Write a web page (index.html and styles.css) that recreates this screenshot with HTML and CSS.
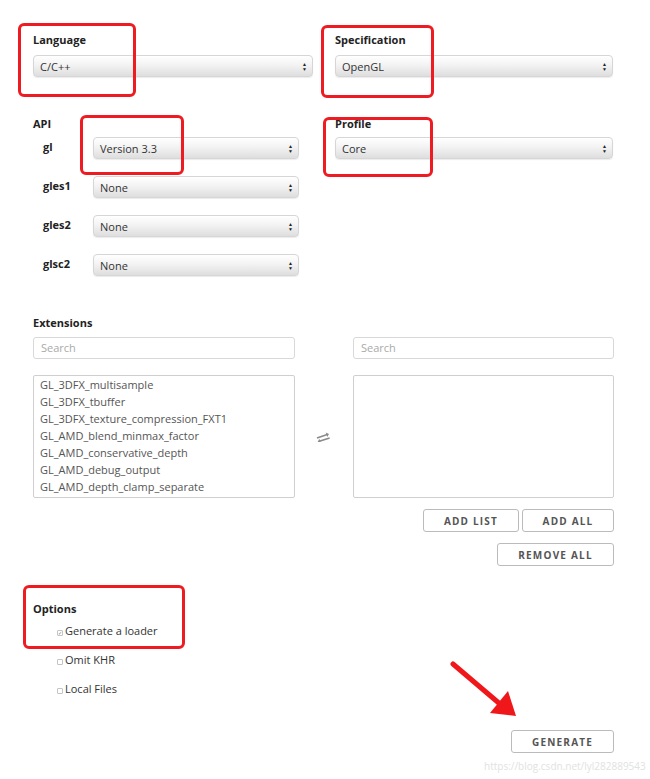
FILE: index.html
```
<!DOCTYPE html>
<html lang="en">
<head>
  <meta charset="UTF-8" />
  <title>glad</title>
  <link rel="stylesheet" href="styles.css">
</head>
<body>
  <div class="page">

    <div class="row two-col">
      <div class="field">
        <label>Language</label>
        <div class="select">C/C++<span class="caret">&#9650;<br>&#9660;</span></div>
      </div>
      <div class="field">
        <label>Specification</label>
        <div class="select">OpenGL<span class="caret">&#9650;<br>&#9660;</span></div>
      </div>
    </div>

    <div class="row two-col api-row">
      <div class="field">
        <label>API</label>
        <div class="api-list">
          <div class="api-item">
            <span class="api-name">gl</span>
            <div class="select">Version 3.3<span class="caret">&#9650;<br>&#9660;</span></div>
          </div>
          <div class="api-item">
            <span class="api-name">gles1</span>
            <div class="select">None<span class="caret">&#9650;<br>&#9660;</span></div>
          </div>
          <div class="api-item">
            <span class="api-name">gles2</span>
            <div class="select">None<span class="caret">&#9650;<br>&#9660;</span></div>
          </div>
          <div class="api-item">
            <span class="api-name">glsc2</span>
            <div class="select">None<span class="caret">&#9650;<br>&#9660;</span></div>
          </div>
        </div>
      </div>
      <div class="field">
        <label>Profile</label>
        <div class="select profile">Core<span class="caret">&#9650;<br>&#9660;</span></div>
      </div>
    </div>

    <div class="row extensions">
      <label>Extensions</label>
      <div class="ext-grid">
        <div class="search">Search</div>
        <div></div>
        <div class="search">Search</div>

        <div class="listbox">
          <div>GL_3DFX_multisample</div>
          <div>GL_3DFX_tbuffer</div>
          <div>GL_3DFX_texture_compression_FXT1</div>
          <div>GL_AMD_blend_minmax_factor</div>
          <div>GL_AMD_conservative_depth</div>
          <div>GL_AMD_debug_output</div>
          <div>GL_AMD_depth_clamp_separate</div>
        </div>
        <div class="swap">
          <svg width="14" height="10" viewBox="0 0 14 10">
            <g transform="rotate(-18 7 5)" fill="#8a8a8a">
              <path d="M1 3.2h10v-1.6l2.6 2.4-2.6 2.4v-1.6h-10z"/>
              <path d="M13 7.2h-10v-1.6l-2.6 2.4 2.6 2.4v-1.6h10z"/>
            </g>
          </svg>
        </div>
        <div class="listbox"></div>
      </div>
      <div class="ext-buttons">
        <div class="btn-row">
          <button class="btn add-list">ADD LIST</button>
          <button class="btn add-all">ADD ALL</button>
        </div>
        <div class="btn-row">
          <button class="btn remove-all">REMOVE ALL</button>
        </div>
      </div>
    </div>

    <div class="row options">
      <label>Options</label>
      <div class="option"><span class="check checked">&#10003;</span>Generate a loader</div>
      <div class="option"><span class="check"></span>Omit KHR</div>
      <div class="option"><span class="check"></span>Local Files</div>
    </div>

    <div class="generate-row">
      <button class="btn generate">GENERATE</button>
    </div>

    <!-- annotations drawn over the form -->
    <div class="mark mark-language"></div>
    <div class="mark mark-spec"></div>
    <div class="mark mark-gl"></div>
    <div class="mark mark-profile"></div>
    <div class="mark mark-options"></div>
    <svg class="arrow" width="80" height="70" viewBox="0 0 80 70">
      <path d="M3 4 L50 44" stroke="#f0171b" stroke-width="5" stroke-linecap="round" fill="none"/>
      <path d="M40 53 L66 56 L58 31 Z" fill="#f0171b"/>
    </svg>
    <div class="watermark">https://blog.csdn.net/lyl282889543</div>
  </div>
</body>
</html>
```

FILE: styles.css
```
* {
  box-sizing: border-box;
}

body {
  margin: 0;
  background: #ffffff;
  font-family: 'Open Sans', 'Liberation Sans', sans-serif;
  font-size: 11px;
  color: #444;
}

.page {
  position: relative;
  width: 650px;
  height: 779px;
  padding: 33px 0 0 33px;
  overflow: hidden;
}

label {
  display: block;
  font-weight: 700;
  color: #222;
  line-height: 14px;
  height: 14px;
}

.two-col {
  display: grid;
  grid-template-columns: 280px 278px;
  column-gap: 22px;
}

.field > .select {
  margin-top: 8px;
}

.select {
  position: relative;
  height: 22px;
  line-height: 21px;
  padding-left: 6px;
  border: 1px solid #d6d6d6;
  border-radius: 4px;
  background: linear-gradient(#ffffff, #f3f3f3 45%, #dedede);
  box-shadow: 0 1px 1px rgba(0, 0, 0, 0.08);
  color: #333;
}

.caret {
  position: absolute;
  right: 5px;
  top: 6px;
  font-size: 5px;
  line-height: 5px;
  color: #222;
}

.api-row {
  margin-top: 40px;
}

.api-list {
  margin-top: 6px;
  display: flex;
  flex-direction: column;
  gap: 17px;
}

.api-item {
  display: flex;
  align-items: center;
}

.api-name {
  width: 60px;
  padding-left: 10px;
  font-weight: 700;
  color: #222;
  margin-top: -4px;
}

.api-item .select {
  width: 206px;
}

.field > .profile {
  margin-top: 6px;
}

.extensions {
  margin-top: 40px;
}

.ext-grid {
  margin-top: 7px;
  display: grid;
  grid-template-columns: 262px 58px 261px;
  row-gap: 16px;
}

.search {
  height: 22px;
  line-height: 20px;
  padding-left: 7px;
  border: 1px solid #d8d8d8;
  border-radius: 3px;
  color: #aaa;
}

.listbox {
  height: 123px;
  padding: 0 6px;
  border: 1px solid #cfcfcf;
  border-radius: 2px;
  line-height: 17px;
  color: #555;
}

.swap {
  display: flex;
  align-items: center;
  justify-content: center;
  padding-right: 2px;
}

.ext-buttons {
  margin-top: 11px;
  display: flex;
  flex-direction: column;
  gap: 11px;
}

.btn-row {
  display: flex;
  justify-content: flex-end;
  gap: 3px;
  width: 581px;
}

.btn {
  height: 23px;
  padding: 0;
  border: 1px solid #bbb;
  border-radius: 3px;
  background: #fff;
  font-family: 'Open Sans', 'Liberation Sans', sans-serif;
  font-size: 10px;
  font-weight: 700;
  letter-spacing: 1.2px;
  color: #555;
}

.add-list {
  width: 96px;
}

.add-all {
  width: 92px;
}

.remove-all {
  width: 117px;
}

.options {
  margin-top: 36px;
}

.option {
  display: flex;
  align-items: center;
  height: 29px;
  padding-left: 24px;
  color: #333;
  font-size: 11px;
}

.check {
  display: inline-block;
  width: 6px;
  height: 6px;
  margin: 4px 2px 0 0;
  border: 1px solid #c4c4c4;
  border-radius: 1px;
  font-size: 5px;
  line-height: 5px;
  text-align: center;
  color: #777;
}

.generate-row {
  margin-top: 27px;
  width: 581px;
  display: flex;
  justify-content: flex-end;
}

.generate {
  width: 103px;
}

.mark {
  position: absolute;
  border: 3px solid #ee1c22;
  border-radius: 6px;
}

.mark-language {
  left: 18px;
  top: 23px;
  width: 118px;
  height: 74px;
}

.mark-spec {
  left: 321px;
  top: 25px;
  width: 113px;
  height: 73px;
}

.mark-gl {
  left: 80px;
  top: 115px;
  width: 104px;
  height: 60px;
}

.mark-profile {
  left: 323px;
  top: 117px;
  width: 110px;
  height: 60px;
}

.mark-options {
  left: 23px;
  top: 585px;
  width: 162px;
  height: 64px;
}

.arrow {
  position: absolute;
  left: 450px;
  top: 660px;
}

.watermark {
  position: absolute;
  left: 484px;
  top: 759px;
  white-space: nowrap;
  color: #e2e2e2;
  font-size: 10px;
}
```
